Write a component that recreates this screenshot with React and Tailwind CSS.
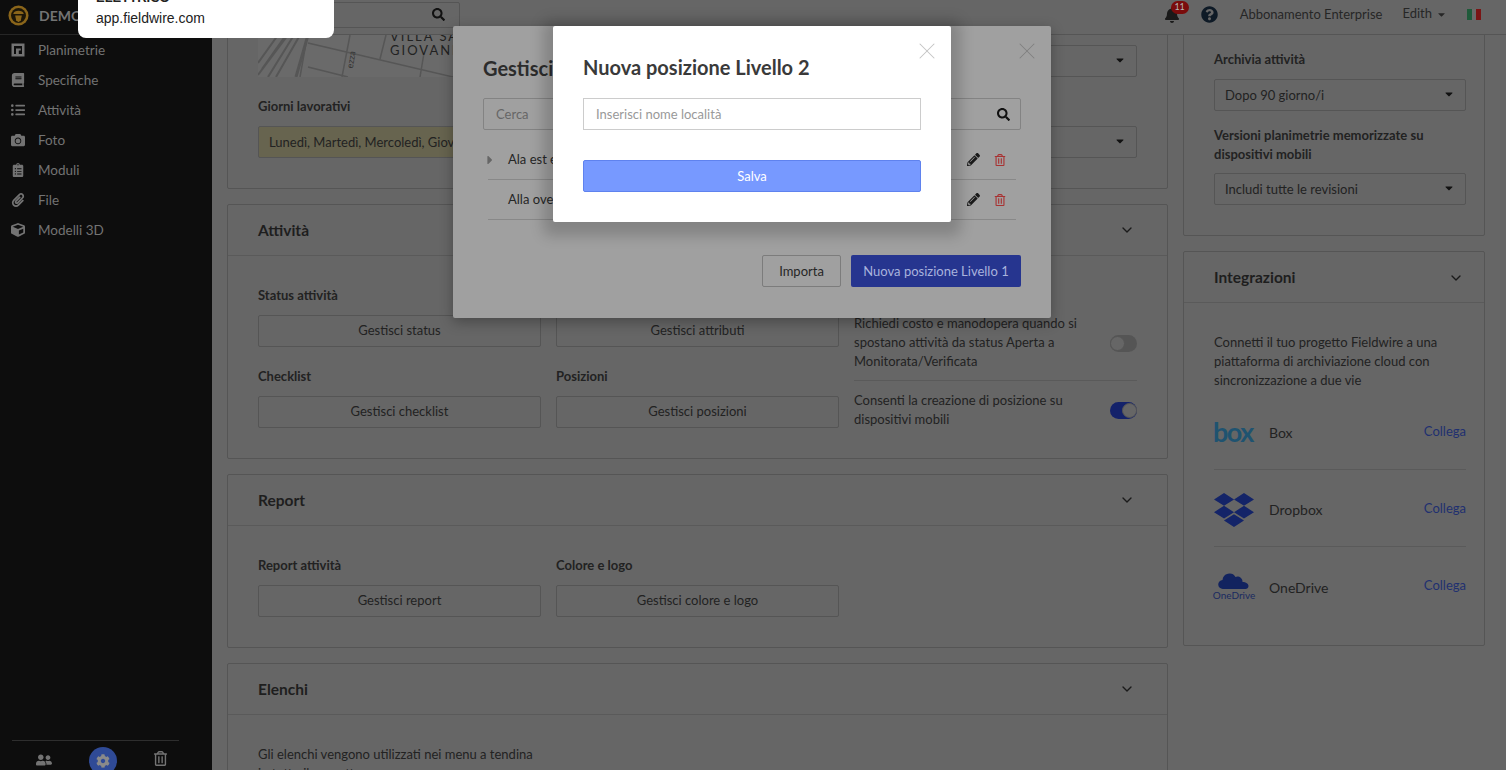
import { ChevronDown, X } from "lucide-react";
import {
  FaBell,
  FaBook,
  FaCamera,
  FaCaretDown,
  FaCaretRight,
  FaClipboardList,
  FaCog,
  FaCube,
  FaDropbox,
  FaListUl,
  FaPaperclip,
  FaPencilAlt,
  FaQuestionCircle,
  FaRegTrashAlt,
  FaSearch,
  FaUserFriends,
} from "react-icons/fa";

const navItems = [
  { label: "Planimetrie", icon: PlanIcon },
  { label: "Specifiche", icon: FaBook },
  { label: "Attività", icon: FaListUl },
  { label: "Foto", icon: FaCamera },
  { label: "Moduli", icon: FaClipboardList },
  { label: "File", icon: FaPaperclip },
  { label: "Modelli 3D", icon: FaCube },
];

function PlanIcon({ className }) {
  return (
    <svg viewBox="0 0 14 14" className={className} fill="none">
      <rect x="0.5" y="0.5" width="13" height="13" fill="currentColor" />
      <path d="M3 3h8v8H7.800V7.400h2V5.600H5v5.400H3z" fill="#0d0d0d" />
    </svg>
  );
}

function Logo() {
  return (
    <svg viewBox="0 0 22 22" className="size-[21px] shrink-0">
      <circle cx="11" cy="11" r="10.500" fill="#8a651a" />
      <circle cx="11" cy="11" r="7.800" fill="#1c1608" />
      <path d="M5.500 9.500C6 5 16 5 16.500 9.500z" fill="#8a651a" />
      <path d="M7.500 11h7l-1 5-2.500 2-2.500-2z" fill="#8a651a" />
    </svg>
  );
}

function MapThumb() {
  return (
    <div className="relative h-[42px] w-[195px] overflow-hidden bg-[#6a6a6a]">
      <svg viewBox="0 0 195 42" className="absolute inset-0 size-full" fill="none" stroke="#565656">
        <path d="M0 28 20 0M4 34 28 0M0 40 30 0M10 42 36 0M18 42 42 0" strokeWidth="2" />
        <path d="M38 42 50 0" strokeWidth="3" />
        <path d="M50 8 195 42M50 32 90 42M92 0l-8 42M128 0l-6 24M166 18l-4 24M48 8l-6 34" strokeWidth="1.500" />
      </svg>
      <span className="absolute left-[132px] top-[-6px] whitespace-nowrap text-[13px] leading-[14px] tracking-[2px] text-[#222]">
        VILLA SAN
        <br />
        GIOVANNI
      </span>
      <span className="absolute left-[84px] top-[20px] rotate-[-80deg] text-[9px] leading-none text-[#333]">
        ezza
      </span>
    </div>
  );
}

function SelectBox({ children, className = "" }) {
  return (
    <div className={`flex h-[32px] items-center justify-between rounded-[2px] border border-[#555] px-[10px] text-[13px] text-[#222] ${className}`}>
      <span className="pt-[2px]">{children}</span>
      <FaCaretDown className="-mt-[2px] size-[12px] text-[#111]" />
    </div>
  );
}

function Card({ title, children, className = "" }) {
  return (
    <section className={`shrink-0 rounded-[2px] border border-[#555] ${className}`}>
      <div className="flex h-[51px] items-center justify-between border-b border-[#5a5a5a] pl-[30px] pr-[32px]">
        <h2 className="pt-[2px] text-[15.500px] font-bold text-[#1e1e1e]">{title}</h2>
        <ChevronDown className="size-[16px] text-[#1a1a1a]" strokeWidth={2} />
      </div>
      {children}
    </section>
  );
}

function ActionField({ label, button }) {
  return (
    <div>
      <p className="mb-[10px] h-[19px] text-[13px] font-bold leading-[19px] text-[#222]">{label}</p>
      <div className="flex h-[32px] items-center justify-center rounded-[2px] border border-[#555] text-[13px] text-[#222]">
        {button}
      </div>
    </div>
  );
}

function Toggle({ on }) {
  return (
    <div className={`mt-[1px] flex h-[17px] w-[27px] shrink-0 items-center rounded-full ${on ? "justify-end bg-[#14226a]" : "justify-start bg-[#555]"}`}>
      <div className="size-[15px] rounded-full border border-[#555] bg-[#666]" />
    </div>
  );
}

function Integration({ logo, name, last }) {
  return (
    <div className={`flex h-[77px] items-center ${last ? "" : "border-b border-[#5a5a5a]"}`}>
      <div className="flex w-[55px] shrink-0 justify-start">{logo}</div>
      <span className="mt-[3px] text-[14px] text-[#222]">{name}</span>
      <span className="ml-auto mt-[1px] text-[13px] text-[#1f3070]">Collega</span>
    </div>
  );
}

function Sidebar() {
  return (
    <aside className="flex h-full w-[212px] shrink-0 flex-col bg-[#0d0d0d] text-[#737373]">
      <div className="flex h-[35px] items-center gap-[10px] border-b border-[#262626] pb-[4px] pl-[8px]">
        <Logo />
        <span className="text-[14px] font-bold">DEMO</span>
      </div>
      <nav className="flex flex-col">
        {navItems.map((item) => (
          <div key={item.label} className="flex h-[30px] items-center gap-[13px] pl-[11px]">
            <item.icon className="-mt-[1px] size-[14px] shrink-0" />
            <span className="text-[13.500px]">{item.label}</span>
          </div>
        ))}
      </nav>
      <div className="ml-[12px] mt-auto flex h-[30px] w-[167px] items-start justify-between border-t border-[#2e2e2e] pl-[24px] pr-[11px] pt-[6px]">
        <FaUserFriends className="mt-[5px] size-[16px]" />
        <div className="flex size-[28px] items-center justify-center rounded-full bg-[#2f4a96]">
          <FaCog className="size-[14px] text-[#8a8a8a]" />
        </div>
        <FaRegTrashAlt className="mt-[4px] size-[15px]" />
      </div>
    </aside>
  );
}

function Header() {
  return (
    <header className="flex h-[35px] shrink-0 items-center border-b border-[#555] pb-[5px] pl-[15px] pr-[25px]">
      <div className="flex h-[26px] w-[233px] items-center justify-end rounded-[2px] border border-[#555] pr-[14px]">
        <FaSearch className="size-[13px] text-[#111]" />
      </div>
      <div className="relative ml-auto">
        <FaBell className="size-[16px] text-[#1a1a1a]" />
        <span className="absolute left-[7px] top-[-6px] flex h-[13px] w-[18px] items-center justify-center rounded-full bg-[#7a0c0c] text-[9px] text-[#b5b5b5]">
          11
        </span>
      </div>
      <FaQuestionCircle className="ml-[21px] size-[17px] text-[#0e1a26]" />
      <span className="ml-[22px] text-[13px] text-[#262626]">Abbonamento Enterprise</span>
      <span className="ml-[20px] mb-[1px] flex items-center gap-[4px] text-[13px] text-[#262626]">
        Edith <FaCaretDown className="size-[11px]" />
      </span>
      <div className="ml-[20px] flex h-[11px] w-[14px]">
        <div className="flex-1 bg-[#1f5a3a]" />
        <div className="flex-1 bg-[#6a6a6a]" />
        <div className="flex-1 bg-[#7a1414]" />
      </div>
    </header>
  );
}

function LeftColumn() {
  return (
    <div className="flex w-[941px] shrink-0 flex-col gap-[15px]">
      <section className="-mt-[10px] h-[164px] shrink-0 rounded-[2px] border border-[#555] px-[30px]">
        <div className="grid grid-cols-[1fr_1fr] gap-[30px] pt-[9px]">
          <MapThumb />
          <div className="ml-auto mt-[10px] w-[300px]">
            <SelectBox />
          </div>
          <div className="-mt-[10px]">
            <p className="mb-[10px] text-[13px] font-bold leading-[19px] text-[#222]">Giorni lavorativi</p>
            <div className="flex h-[32px] items-center whitespace-nowrap rounded-[2px] border border-[#555] bg-[#67644f] px-[10px] pt-[1px] text-[13px] text-[#222]">
              Lunedì, Martedì, Mercoledì, Giovedì, Venerdì
            </div>
          </div>
          <div className="ml-auto mt-[19px] w-[300px]">
            <SelectBox />
          </div>
        </div>
      </section>

      <Card title="Attività" className="h-[255px]">
        <div className="grid grid-cols-[283px_283px_283px] gap-x-[15px] px-[30px] pt-[30px]">
          <div className="col-span-2 grid grid-cols-2 gap-x-[15px] gap-y-[19px]">
            <ActionField label="Status attività" button="Gestisci status" />
            <ActionField label="Attributi attività" button="Gestisci attributi" />
            <ActionField label="Checklist" button="Gestisci checklist" />
            <ActionField label="Posizioni" button="Gestisci posizioni" />
          </div>
          <div className="pt-[28px] text-[13px] leading-[19px] text-[#222]">
            <div className="flex items-center justify-between gap-[16px] border-b border-[#5a5a5a] pb-[9px]">
              <p className="w-[225px]">Richiedi costo e manodopera quando si spostano attività da status Aperta a Monitorata/Verificata</p>
              <Toggle />
            </div>
            <div className="flex items-center justify-between gap-[16px] pt-[10px]">
              <p className="w-[225px]">Consenti la creazione di posizione su dispositivi mobili</p>
              <Toggle on />
            </div>
          </div>
        </div>
      </Card>

      <Card title="Report" className="h-[174px]">
        <div className="grid grid-cols-[283px_283px] gap-x-[15px] px-[30px] pt-[30px]">
          <ActionField label="Report attività" button="Gestisci report" />
          <ActionField label="Colore e logo" button="Gestisci colore e logo" />
        </div>
      </Card>

      <Card title="Elenchi" className="h-[200px]">
        <p className="w-[313px] pl-[30px] pt-[30px] text-[13px] leading-[19px] text-[#222]">
          Gli elenchi vengono utilizzati nei menu a tendina in tutto il progetto
        </p>
      </Card>
    </div>
  );
}

function RightColumn() {
  return (
    <div className="flex w-[302px] shrink-0 flex-col gap-[15px]">
      <section className="-mt-[10px] h-[211px] shrink-0 rounded-[2px] border border-[#555] px-[30px] pt-[24px]">
        <p className="mb-[10px] text-[13px] font-bold leading-[19px] text-[#222]">Archivia attività</p>
        <SelectBox className="w-[252px]">Dopo 90 giorno/i</SelectBox>
        <p className="mb-[9px] mt-[15px] text-[13px] font-bold leading-[19px] text-[#222]">
          Versioni planimetrie memorizzate su dispositivi mobili
        </p>
        <SelectBox className="w-[252px]">Includi tutte le revisioni</SelectBox>
      </section>
      <section className="h-[395px] shrink-0 rounded-[2px] border border-[#555]">
        <div className="flex h-[51px] items-center justify-between border-b border-[#5a5a5a] pl-[30px] pr-[20px] pt-[1px]">
          <h2 className="text-[15.500px] font-bold text-[#1e1e1e]">Integrazioni</h2>
          <ChevronDown className="size-[16px] text-[#1a1a1a]" strokeWidth={2} />
        </div>
        <div className="px-[30px] pt-[30px]">
          <p className="mb-[3px] text-[13px] leading-[19px] text-[#222]">
            Connetti il tuo progetto Fieldwire a una piattaforma di archiviazione cloud con sincronizzazione a due vie
          </p>
          <div className="w-[252px]">
            <Integration
              name="Box"
              logo={<span className="-ml-[1px] text-[27px] font-bold leading-none tracking-[-1.500px] text-[#1f5370]">box</span>}
            />
            <Integration name="Dropbox" logo={<FaDropbox className="mt-[3px] size-[40px] text-[#142468]" />} />
            <Integration
              last
              name="OneDrive"
              logo={
                <div className="flex w-[40px] flex-col items-center">
                  <svg viewBox="0 0 32 20" className="h-[20px] w-[32px]" fill="#12235f">
                    <path d="M5 19a4.500 4.500 0 0 1-.5-9 7 7 0 0 1 13-3 5 5 0 0 1 7 5c3.500 0 6 2 6 4s-1.500 3-3 3z" />
                  </svg>
                  <span className="text-[10px] leading-[11px] text-[#1a2a60]">OneDrive</span>
                </div>
              }
            />
          </div>
        </div>
      </section>
    </div>
  );
}

function ModalLocations() {
  return (
    <div className="absolute left-[453px] top-[26px] flex h-[292px] w-[598px] flex-col rounded-[2px] bg-[#a0a0a0] px-[30px] shadow-[0_4px_14px_rgba(0,0,0,0.3)]">
      <X className="absolute right-[10px] top-[11px] size-[28px] text-[#808080]" strokeWidth={0.9} />
      <h2 className="mt-[28px] text-[20px] font-bold leading-[28px] text-[#2c2c2c]">Gestisci posizioni</h2>
      <div className="mt-[16px] flex h-[32px] items-center justify-between rounded-[2px] border border-[#838383] pl-[12px] pr-[10px] text-[13px] text-[#666]">
        <span className="pt-[2px]">Cerca</span>
        <FaSearch className="size-[13px] text-[#111]" />
      </div>
      <ul className="mx-[5px] mt-[10px] text-[13px] text-[#262626]">
        <li className="flex h-[40px] items-center border-b border-[#888]">
          <FaCaretRight className="-ml-[5px] size-[14px] text-[#666]" />
          <span className="ml-[11px]">Ala est e</span>
          <FaPencilAlt className="ml-auto size-[13px] text-[#1a1a1a]" />
          <FaRegTrashAlt className="ml-[14px] mr-[10px] size-[12px] text-[#a83232]" />
        </li>
        <li className="flex h-[40px] items-center border-b border-[#888] pl-[20px]">
          <span>Alla ovest</span>
          <FaPencilAlt className="ml-auto size-[13px] text-[#1a1a1a]" />
          <FaRegTrashAlt className="ml-[14px] mr-[10px] size-[12px] text-[#a83232]" />
        </li>
      </ul>
      <div className="mt-[35px] flex justify-end gap-[10px] text-[13px]">
        <button className="h-[32px] w-[79px] rounded-[2px] border border-[#7c7c7c] pt-[1px] text-[#262626]">Importa</button>
        <button className="h-[32px] w-[170px] rounded-[2px] bg-[#26358f] pt-[1px] text-[#a9b3dd]">Nuova posizione Livello 1</button>
      </div>
    </div>
  );
}

function ModalNewLocation() {
  return (
    <div className="absolute left-[553px] top-[26px] flex h-[196px] w-[398px] flex-col rounded-[2px] bg-white px-[30px] shadow-[0_4px_14px_10px_rgba(0,0,0,0.18)]">
      <X className="absolute right-[10px] top-[11px] size-[28px] text-[#c4c4c4]" strokeWidth={0.9} />
      <h2 className="mt-[27px] text-[20px] font-bold leading-[28px] text-[#3a3a3a]">Nuova posizione Livello 2</h2>
      <div className="mt-[17px] flex h-[32px] items-center border border-[#ccc] px-[12px] pt-[1px] text-[13px] text-[#999]">
        Inserisci nome località
      </div>
      <button className="mt-[30px] h-[32px] rounded-[2px] border border-[#5f82ee] bg-[#7799ff] pt-[1px] text-[13px] text-white">
        Salva
      </button>
    </div>
  );
}

export default function App() {
  return (
    <div className="relative flex h-[770px] w-[1506px] overflow-hidden bg-[#666] font-['Lato','Noto_Sans',sans-serif]">
      {/* the page sits behind two dialogs, so its colours are written dimmed */}
      <Sidebar />
      <main className="flex min-h-0 min-w-0 flex-1 flex-col">
        <Header />
        <div className="flex min-h-0 flex-1 gap-[15px] overflow-hidden pl-[15px]">
          <LeftColumn />
          <RightColumn />
        </div>
      </main>

      <ModalLocations />
      <ModalNewLocation />

      <div className="absolute left-[78px] top-0 h-[38px] w-[256px] overflow-hidden rounded-b-[8px] bg-white pl-[18px] font-['Liberation_Sans',sans-serif] text-[#222]">
        <p className="-mt-[10px] text-[13px] font-bold leading-[16px]">ELETTRICO</p>
        <p className="mt-[4px] text-[14px] leading-[16px]">app.fieldwire.com</p>
      </div>
    </div>
  );
}
